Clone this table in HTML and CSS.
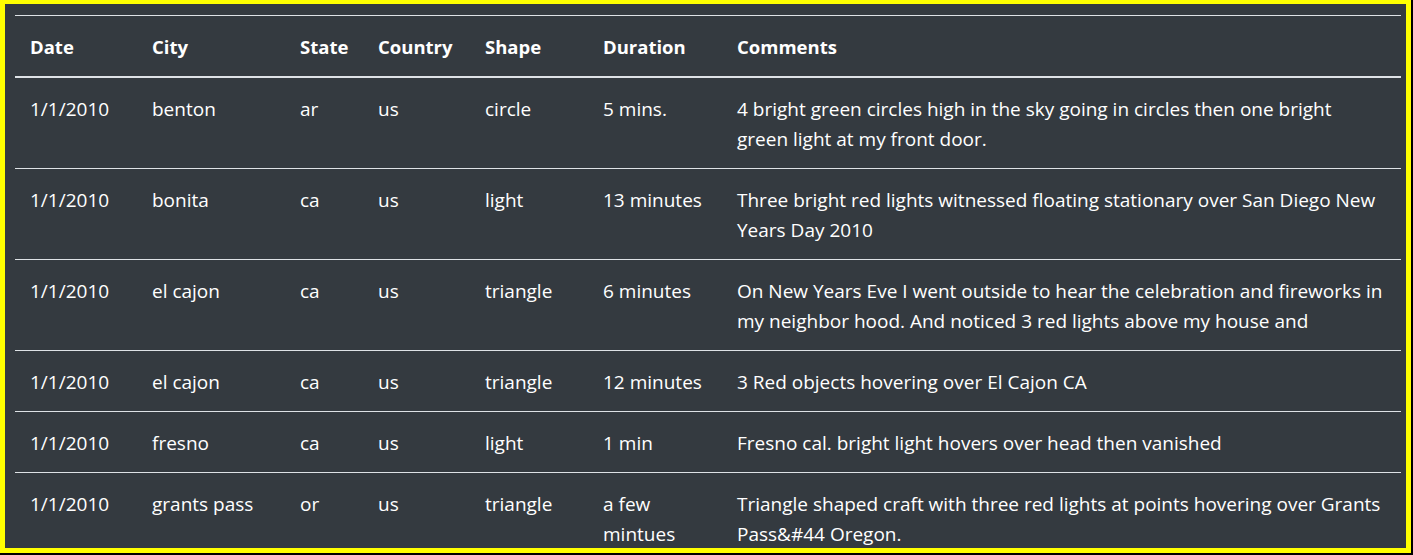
FILE: index.html
```html
<!DOCTYPE html>
<html lang="en">
<head>
<meta charset="utf-8">
<title>UFO Sightings</title>
<link rel="stylesheet" href="styles.css">
</head>
<body>
<div class="frame">
  <table class="ufo-table">
    <colgroup>
      <col class="c-date"><col class="c-city"><col class="c-state"><col class="c-country"><col class="c-shape"><col class="c-duration"><col class="c-comments">
    </colgroup>
    <thead>
      <tr><th>Date</th><th>City</th><th>State</th><th>Country</th><th>Shape</th><th>Duration</th><th>Comments</th></tr>
    </thead>
    <tbody>
      <tr><td>1/1/2010</td><td>benton</td><td>ar</td><td>us</td><td>circle</td><td>5 mins.</td><td>4 bright green circles high in the sky going in circles then one bright green light at my front door.</td></tr>
      <tr><td>1/1/2010</td><td>bonita</td><td>ca</td><td>us</td><td>light</td><td>13 minutes</td><td>Three bright red lights witnessed floating stationary over San Diego New Years Day 2010</td></tr>
      <tr><td>1/1/2010</td><td>el cajon</td><td>ca</td><td>us</td><td>triangle</td><td>6 minutes</td><td>On New Years Eve I went outside to hear the celebration and fireworks in my neighbor hood. And noticed 3 red lights above my house and</td></tr>
      <tr><td>1/1/2010</td><td>el cajon</td><td>ca</td><td>us</td><td>triangle</td><td>12 minutes</td><td>3 Red objects hovering over El Cajon CA</td></tr>
      <tr><td>1/1/2010</td><td>fresno</td><td>ca</td><td>us</td><td>light</td><td>1 min</td><td>Fresno cal. bright light hovers over head then vanished</td></tr>
      <tr><td>1/1/2010</td><td>grants pass</td><td>or</td><td>us</td><td>triangle</td><td>a few mintues</td><td>Triangle shaped craft with three red lights at points hovering over Grants Pass&amp;#44 Oregon.</td></tr>
    </tbody>
  </table>
</div>
</body>
</html>
```

FILE: styles.css
```css
html, body {
  margin: 0;
  padding: 0;
  background: #000;
}

.frame {
  box-sizing: border-box;
  width: 1411px;
  height: 553px;
  border: 5px solid #ffff00;
  border-top-width: 4px;
  background: #343a40;
  padding: 11px 5px 0 10px;
  overflow: hidden;
}

.ufo-table {
  width: 1386px;
  border-collapse: collapse;
  table-layout: fixed;
  color: #fff;
  font-family: "Open Sans", "Noto Sans", sans-serif;
  font-size: 19px;
  line-height: 30px;
}

.c-date { width: 122px; }
.c-city { width: 148px; }
.c-state { width: 78px; }
.c-country { width: 107px; }
.c-shape { width: 118px; }
.c-duration { width: 134px; }
.c-comments { width: auto; }

.ufo-table th,
.ufo-table td {
  padding: 16px 15px 14px;
  text-align: left;
  vertical-align: top;
  border-top: 1px solid #dee2e6;
}

.ufo-table th {
  font-weight: 700;
  font-size: 18.5px;
  border-bottom: 2px solid #dee2e6;
}

.ufo-table tbody tr:first-child td {
  border-top: 0;
}
```
